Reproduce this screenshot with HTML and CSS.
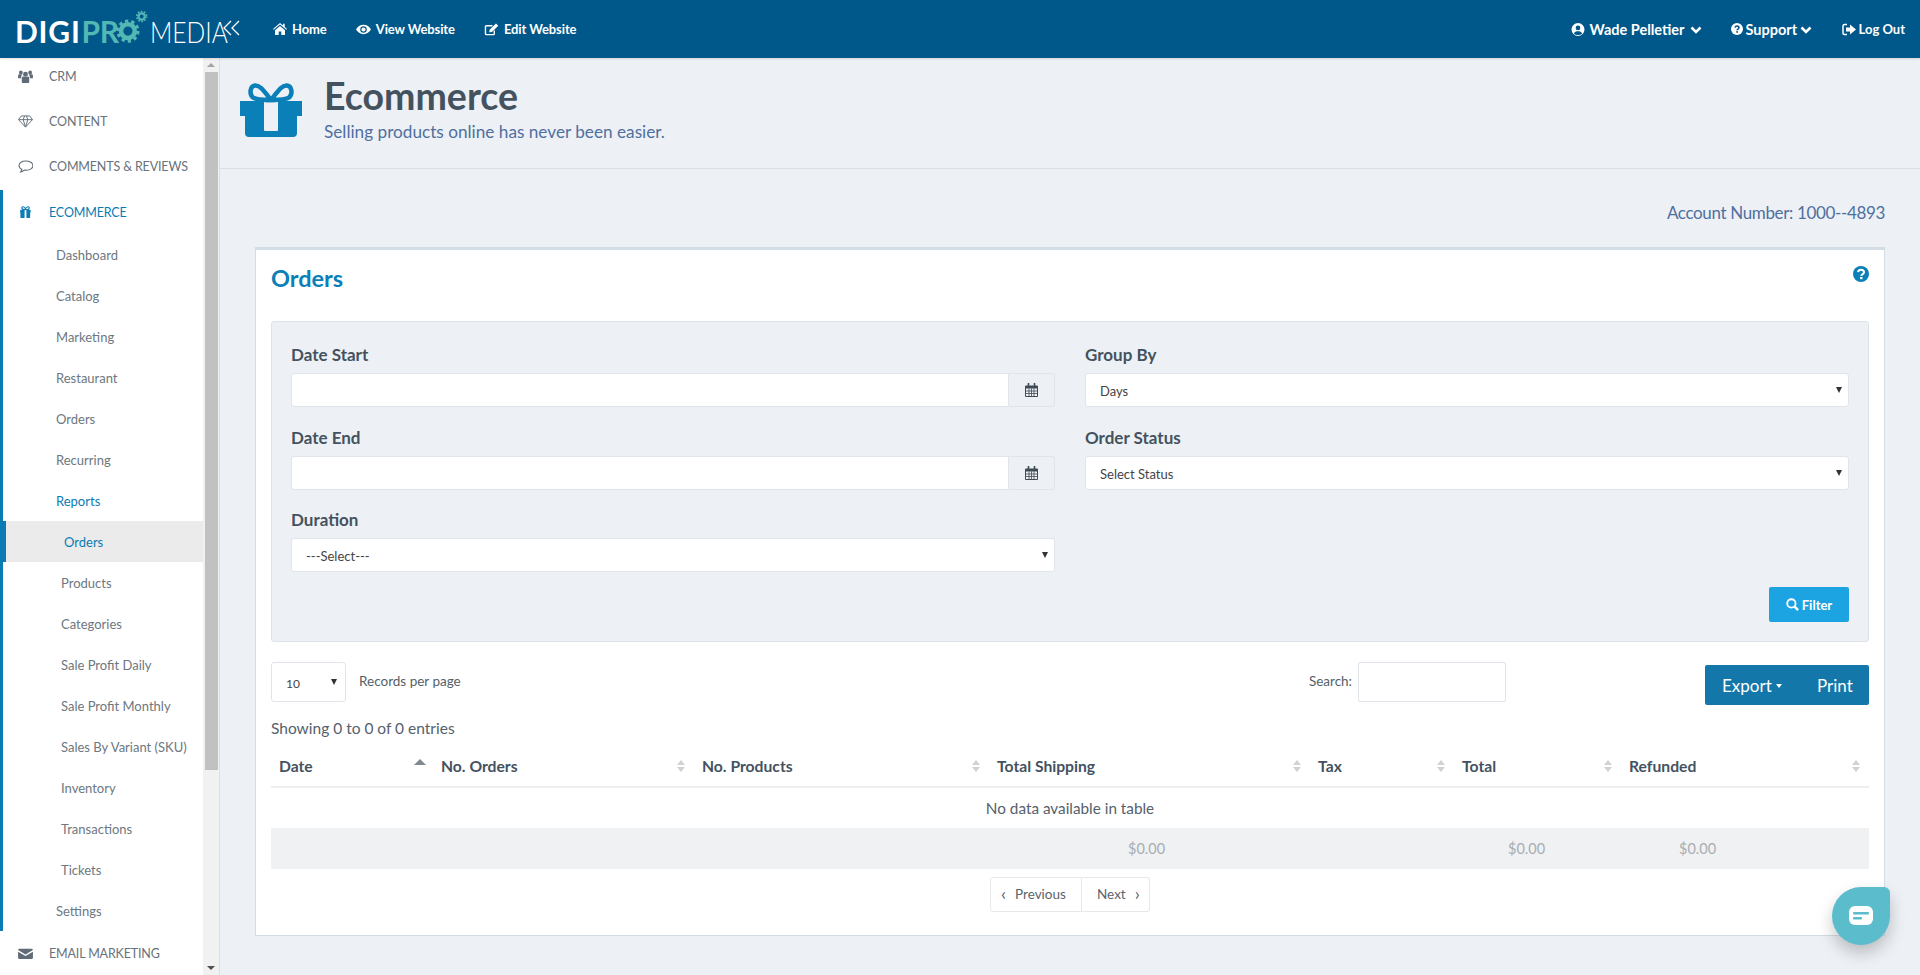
FILE: index.html
```html
<!DOCTYPE html>
<html lang="en">
<head>
<meta charset="utf-8">
<title>Ecommerce Orders</title>
<link rel="stylesheet" href="styles.css">
</head>
<body>
<header class="topbar">
  <div class="logo">
    <span class="lg-digi">DIGI</span><span class="lg-pro">PR</span>
    <svg class="lg-gear" viewBox="0 0 36 36"><g fill="none" stroke="#52b8b4"><circle cx="13" cy="23" r="7.5" stroke-width="5"/><circle cx="13" cy="23" r="11" stroke-width="3.4" stroke-dasharray="3.6 3.3"/><circle cx="28" cy="7" r="3.4" stroke-width="2.4"/><circle cx="28" cy="7" r="5.4" stroke-width="1.8" stroke-dasharray="1.9 1.5"/></g></svg>
    <span class="lg-media">MEDIA</span>
  </div>
  <svg class="collapse" viewBox="0 0 18 16"><path d="M8 1 1 8l7 7M16 1 9 8l7 7" fill="none" stroke="#fff" stroke-width="1.3"/></svg>
  <nav class="nav-left">
    <a class="nav-link"><svg class="ico13" viewBox="0 0 14 12"><path d="M7 0 0 6l.7.8L7 1.5l6.300 5.300L14 6l-2.300-2V.8H10v1.700zM2 7.300V12h3.700V8.500h2.600V12H12V7.300L7 3z" fill="#fff"/></svg>Home</a>
    <a class="nav-link"><svg class="ico15" viewBox="0 0 16 12"><path d="M8 1C4.500 1 1.700 3.200 0 6c1.700 2.800 4.500 5 8 5s6.300-2.200 8-5c-1.700-2.800-4.500-5-8-5zm0 8.500A3.500 3.500 0 1 1 8 2.500a3.500 3.500 0 0 1 0 7z" fill="#fff"/><circle cx="8" cy="6" r="2.200" fill="#fff"/></svg>View Website</a>
    <a class="nav-link"><svg class="ico15" viewBox="0 0 16 14"><path d="M11 8v3.500a1 1 0 0 1-1 1H2.500a1 1 0 0 1-1-1V4a1 1 0 0 1 1-1H9" fill="none" stroke="#fff" stroke-width="1.500"/><path d="M5.500 10 6 7.300 12.800.5 15.300 3 8.500 9.800z" fill="#fff"/></svg>Edit Website</a>
  </nav>
  <nav class="nav-right">
    <a class="nav-link user"><svg class="ico14" viewBox="0 0 14 14"><circle cx="7" cy="7" r="7" fill="#fff"/><circle cx="7" cy="5.300" r="2.500" fill="#00578a"/><path d="M2.500 11.300C3.300 9.300 5 8.800 7 8.800s3.700.5 4.500 2.500A6 6 0 0 1 7 13a6 6 0 0 1-4.500-1.700z" fill="#00578a"/></svg>Wade Pelletier<svg class="chev" viewBox="0 0 12 8"><path d="M1.500 1.500 6 6l4.500-4.500" fill="none" stroke="#fff" stroke-width="2.600"/></svg></a>
    <a class="nav-link support"><svg class="ico12" viewBox="0 0 14 14"><circle cx="7" cy="7" r="7" fill="#fff"/><path d="M4.800 5.300C5 4 6 3.500 7 3.500c1.300 0 2.300.8 2.300 2 0 1.600-2.200 1.600-2.200 3" fill="none" stroke="#00578a" stroke-width="1.700"/><rect x="6.100" y="9.500" width="2" height="1.800" fill="#00578a"/></svg>Support<svg class="chev" viewBox="0 0 12 8"><path d="M1.500 1.500 6 6l4.500-4.500" fill="none" stroke="#fff" stroke-width="2.600"/></svg></a>
    <a class="nav-link logout"><svg class="ico14" viewBox="0 0 14 12"><path d="M5 1H2.500A1.500 1.500 0 0 0 1 2.500v7A1.500 1.500 0 0 0 2.500 11H5" fill="none" stroke="#fff" stroke-width="1.500"/><path d="M8 1l6 5-6 5V8H4V4h4z" fill="#fff"/></svg>Log Out</a>
  </nav>
</header>
<div class="shell">
  <aside class="sidebar">
    <ul class="side-list">
      <li class="top-item lift"><svg class="side-ico" viewBox="0 0 16 14"><g fill="#5f6b76"><circle cx="8" cy="4.500" r="2.600"/><circle cx="3" cy="2.600" r="2"/><circle cx="13" cy="2.600" r="2"/><path d="M4 8.500C4 7.500 5 7 6 7h4c1 0 2 .5 2 1.500V13a1 1 0 0 1-1 1H5a1 1 0 0 1-1-1z"/><path d="M0 6c0-1 .8-1.500 1.500-1.500h3L3.300 7v2H.7A.7.700 0 0 1 0 8.300zM16 6c0-1-.8-1.500-1.500-1.500h-3L12.700 7v2h2.600a.7.700 0 0 0 .7-.7z"/></g></svg>CRM</li>
      <li class="top-item lift"><svg class="side-ico" viewBox="0 0 16 14"><path d="M3.500 1h9L15.500 5 8 13 .5 5zM.5 5h15M5.500 5 8 13l2.500-8M5.500 5 7 1M10.500 5 9 1" fill="none" stroke="#5f6b76" stroke-width="1"/></svg>CONTENT</li>
      <li class="top-item lift"><svg class="side-ico" viewBox="0 0 16 14"><path d="M8 1c-3.900 0-7 2.200-7 5 0 1.800 1.300 3.300 3.200 4.200-.2 1-.8 1.900-1.400 2.600 1.400-.2 2.900-.8 3.900-1.900.7.100 1.500.1 2.300.1 3.900 0 7-2.200 7-5s-3.100-5-8-5z" fill="none" stroke="#5f6b76" stroke-width="1.100"/></svg>COMMENTS &amp; REVIEWS</li>
      <li class="group">
        <div class="top-item active"><svg class="side-ico" viewBox="0 0 16 14"><path d="M4 1.800C4 .3 6.500.2 8 3c1.500-2.800 4-2.700 4-1.200S10 4 8 4 4 3.300 4 1.800z" fill="none" stroke="#0a7cb3" stroke-width="1.200"/><path d="M2.500 4h4.500v9H3.500a1 1 0 0 1-1-1V7h-.500zM9 4h4.500v3h-.5v5a1 1 0 0 1-1 1H9z" fill="#0a7cb3"/></svg>ECOMMERCE</div>
        <ul class="sub-list">
          <li class="sub">Dashboard</li>
          <li class="sub">Catalog</li>
          <li class="sub">Marketing</li>
          <li class="sub">Restaurant</li>
          <li class="sub">Orders</li>
          <li class="sub">Recurring</li>
          <li class="sub active">Reports</li>
          <li class="subsub current">Orders</li>
          <li class="subsub">Products</li>
          <li class="subsub">Categories</li>
          <li class="subsub">Sale Profit Daily</li>
          <li class="subsub">Sale Profit Monthly</li>
          <li class="subsub">Sales By Variant (SKU)</li>
          <li class="subsub">Inventory</li>
          <li class="subsub">Transactions</li>
          <li class="subsub">Tickets</li>
          <li class="sub">Settings</li>
        </ul>
      </li>
      <li class="top-item"><svg class="side-ico" viewBox="0 0 16 14"><path d="M1.500 2h13A1.500 1.500 0 0 1 16 3.300L8 8 0 3.300A1.500 1.500 0 0 1 1.500 2zM0 5l8 4.700L16 5v6.500a1.500 1.500 0 0 1-1.500 1.500h-13A1.500 1.500 0 0 1 0 11.500z" fill="#5f6b76"/></svg>EMAIL MARKETING</li>
    </ul>
  </aside>
  <div class="scroll">
    <div class="scroll-btn"><span class="tri-up"></span></div>
    <div class="scroll-thumb"></div>
    <div class="scroll-rest"></div>
    <div class="scroll-btn"><span class="tri-down"></span></div>
  </div>
  <main class="main">
    <section class="page-head">
      <svg class="gift" viewBox="0 0 62 54"><g fill="#0a7fb8"><rect x="0" y="18" width="62" height="15"/><path d="M5 33h52v17a4 4 0 0 1-4 4H9a4 4 0 0 1-4-4z"/></g><rect x="24" y="18" width="14" height="30" rx="1" fill="#edf1f5"/><g fill="none" stroke="#0a7fb8" stroke-width="4.500"><path d="M31 17C24 8 20 2 15 2.500 10 3 9 11 13 14.500c3 2.500 12 2.500 18 2.500z"/><path d="M31 17c7-9 11-15 16-14.500C52 3 53 11 49 14.500 46 17 37 17 31 17z"/></g></svg>
      <div class="head-text">
        <h1>Ecommerce</h1>
        <p>Selling products online has never been easier.</p>
      </div>
    </section>
    <div class="account">Account Number: 1000--4893</div>
    <section class="card">
      <div class="card-head">
        <h2>Orders</h2>
        <svg class="help" viewBox="0 0 16 16"><circle cx="8" cy="8" r="8" fill="#0a7fb8"/><path d="M5 6.200C5.200 4.500 6.500 3.700 8 3.700c1.700 0 3 1 3 2.500 0 2-2.700 2.100-2.700 3.800" fill="none" stroke="#fff" stroke-width="2"/><rect x="7.100" y="11" width="2.400" height="2.200" fill="#fff"/></svg>
      </div>
      <div class="filter">
        <div class="filter-grid">
          <div class="field"><label>Date Start</label><div class="input-group"><input class="ctrl grow" type="text"><span class="addon"><svg class="cal" viewBox="0 0 13 14"><path d="M1 2.500h11a1 1 0 0 1 1 1V13a1 1 0 0 1-1 1H1a1 1 0 0 1-1-1V3.500a1 1 0 0 1 1-1z" fill="#3f4a55"/><path d="M1 5.500h11v7.500H1z" fill="#edf1f5"/><path d="M4 5.500V13M6.500 5.500V13M9 5.500V13M1 8h11M1 10.500h11" stroke="#3f4a55" stroke-width=".8"/><path d="M3.500 0v3M9.500 0v3" stroke="#3f4a55" stroke-width="1.600"/></svg></span></div></div>
          <div class="field"><label>Group By</label><div class="sel"><select class="ctrl"><option>Days</option></select></div></div>
          <div class="field"><label>Date End</label><div class="input-group"><input class="ctrl grow" type="text"><span class="addon"><svg class="cal" viewBox="0 0 13 14"><path d="M1 2.500h11a1 1 0 0 1 1 1V13a1 1 0 0 1-1 1H1a1 1 0 0 1-1-1V3.500a1 1 0 0 1 1-1z" fill="#3f4a55"/><path d="M1 5.500h11v7.500H1z" fill="#edf1f5"/><path d="M4 5.500V13M6.500 5.500V13M9 5.500V13M1 8h11M1 10.500h11" stroke="#3f4a55" stroke-width=".8"/><path d="M3.500 0v3M9.500 0v3" stroke="#3f4a55" stroke-width="1.600"/></svg></span></div></div>
          <div class="field"><label>Order Status</label><div class="sel"><select class="ctrl"><option>Select Status</option></select></div></div>
          <div class="field"><label>Duration</label><div class="sel"><select class="ctrl"><option>---Select---</option></select></div></div>
        </div>
        <div class="filter-actions">
          <button class="btn-filter" type="button"><svg class="search-ico" viewBox="0 0 14 14"><circle cx="5.800" cy="5.800" r="4.500" fill="none" stroke="#fff" stroke-width="2"/><path d="m9 9 4 4" stroke="#fff" stroke-width="2.600"/></svg>Filter</button>
        </div>
      </div>
      <div class="tools">
        <div class="sel sel-len"><select class="ctrl"><option>10</option></select></div>
        <span class="rpp">Records per page</span>
        <span class="spacer"></span>
        <label class="search-lbl">Search:</label>
        <input class="search-input" type="text">
        <div class="exports"><span class="exp">Export<i class="caret"></i></span><span class="prt">Print</span></div>
      </div>
      <div class="showing">Showing 0 to 0 of 0 entries</div>
      <table class="grid">
        <colgroup><col class="c1"><col class="c2"><col class="c3"><col class="c4"><col class="c5"><col class="c6"><col class="c7"></colgroup>
        <thead>
          <tr>
            <th><div class="th"><span>Date</span><span class="sort asc"></span></div></th>
            <th><div class="th"><span>No. Orders</span><span class="sort"></span></div></th>
            <th><div class="th"><span>No. Products</span><span class="sort"></span></div></th>
            <th><div class="th"><span>Total Shipping</span><span class="sort"></span></div></th>
            <th><div class="th"><span>Tax</span><span class="sort"></span></div></th>
            <th><div class="th"><span>Total</span><span class="sort"></span></div></th>
            <th><div class="th"><span>Refunded</span><span class="sort"></span></div></th>
          </tr>
        </thead>
        <tbody><tr><td class="empty" colspan="7">No data available in table</td></tr></tbody>
        <tfoot>
          <tr><td></td><td></td><td></td><td class="v1">$0.00</td><td></td><td class="v2">$0.00</td><td class="v3">$0.00</td></tr>
        </tfoot>
      </table>
      <div class="pager">
        <a class="pg prev"><span class="ang">&#8249;</span>Previous</a><a class="pg next">Next<span class="ang">&#8250;</span></a>
      </div>
    </section>
  </main>
</div>
<div class="chat"><svg class="chat-ico" viewBox="0 0 24 20"><rect x="0" y="0" width="24" height="19" rx="6" fill="#fff"/><rect x="4" y="6" width="16" height="2.600" rx="1" fill="#5bbccb"/><rect x="4" y="11" width="9" height="2.600" rx="1" fill="#5bbccb"/></svg></div>
</body>
</html>
```

FILE: styles.css
```css
* { box-sizing: border-box; }
html, body { margin: 0; height: 100%; overflow: hidden; }
body { font-family: "Lato", "Noto Sans", sans-serif; font-size: 14px; color: #4a5561; background: #edf1f5; display: flex; flex-direction: column; }
ul { list-style: none; margin: 0; padding: 0; }

.topbar { height: 58px; flex: none; background: #00578a; color: #fff; display: flex; align-items: center; padding-left: 15px; padding-right: 15px; position: relative; z-index: 2; box-shadow: 0 1px 2px rgba(0,0,0,.12); }
.logo { width: 208px; flex: none; display: flex; align-items: center; height: 58px; padding-top: 3px; font-size: 30px; line-height: 1; white-space: nowrap; }
.lg-digi { font-weight: 700; letter-spacing: .8px; }
.lg-pro { font-weight: 700; color: #52b8b4; letter-spacing: -.5px; margin-left: 1px; }
.lg-gear { width: 33px; height: 33px; flex: none; margin: -9px -2px 0 -2px; }
.lg-media { font-weight: 300; font-size: 30px; display: inline-block; transform: scaleX(.82); transform-origin: left center; margin-left: 3px; }
.collapse { width: 18px; height: 16px; flex: none; margin-top: -2px; }
.nav-left { display: flex; margin-left: 32px; gap: 29px; }
.nav-right { display: flex; margin-left: auto; align-items: center; }
.nav-link { display: flex; align-items: center; gap: 5px; color: #fff; font-size: 13px; font-weight: 700; white-space: nowrap; letter-spacing: -.1px; }
.user { font-size: 14.500px; width: 160px; letter-spacing: 0; }
.support { font-size: 14.500px; gap: 3px; width: 111px; letter-spacing: 0; }
.logout { font-size: 13px; gap: 3px; letter-spacing: 0; }
.ico12 { width: 12px; height: 12px; }
.ico13 { width: 14px; height: 12px; }
.ico14 { width: 14px; height: 13px; }
.ico15 { width: 15px; height: 13px; }
.chev { width: 12px; height: 8px; margin-top: 2px; }

.shell { flex: 1; display: flex; min-height: 0; }
.sidebar { width: 203px; flex: none; background: #fff; overflow: hidden; }
.side-list { margin-top: -3px; }
.top-item { height: 45px; display: flex; align-items: center; padding-left: 18px; color: #68727c; font-size: 12.500px; white-space: nowrap; letter-spacing: -.15px; }
.top-item.lift { padding-bottom: 2px; }
.top-item.active { color: #0a7cb3; height: 44px; }
.side-ico { width: 15px; height: 13px; flex: none; margin-right: 16px; }
.group { border-left: 3px solid #0a7cb3; }
.group .top-item { padding-left: 15px; }
.sub, .subsub { height: 41px; display: flex; align-items: center; color: #6d7780; font-size: 13px; white-space: nowrap; }
.sub { padding-left: 53px; }
.sub.active { color: #0a7cb3; }
.subsub { padding-left: 58px; }
.current { background: #ebebeb; border-left: 3px solid #0a7cb3; color: #0a7cb3; padding-left: 58px; }

.scroll { width: 17px; flex: none; background: #f1f1f1; border-right: 1px solid #dbe0e5; display: flex; flex-direction: column; }
.scroll-btn { height: 14px; display: flex; align-items: center; justify-content: center; }
.scroll-thumb { height: 698px; background: #c1c1c1; margin: 0 1px 0 2px; }
.scroll-rest { flex: 1; }
.tri-up { border: 4px solid transparent; border-top: 0; border-bottom: 4px solid #a3a3a3; }
.tri-down { border: 4px solid transparent; border-bottom: 0; border-top: 4px solid #505050; }

.main { flex: 1; min-width: 0; background: #edf1f5; }
.page-head { height: 111px; border-bottom: 1px solid #d9dfe5; display: flex; padding: 25px 0 0 20px; }
.gift { width: 62px; height: 54px; flex: none; }
.head-text { margin-left: 22px; margin-top: -9px; }
.head-text h1 { margin: 0 0 2px; font-size: 37.500px; line-height: 44px; font-weight: 700; color: #44525f; }
.head-text p { margin: 0; font-size: 17.200px; line-height: 24px; color: #4f6fa0; }
.account { height: 78px; padding: 33px 35px 0 0; text-align: right; font-size: 17px; letter-spacing: -.35px; line-height: 22px; color: #4f6fa0; }
.card { margin: 0 35px; height: 689px; background: #fff; border: 1px solid #d3dde6; border-top-width: 3px; padding: 13px 15px 0; }
.card-head { display: flex; justify-content: space-between; height: 30px; margin-bottom: 28px; }
.card-head h2 { margin: 0; font-size: 23.500px; line-height: 30px; font-weight: 700; color: #0a7fb8; }
.help { width: 16px; height: 16px; margin: 3px 0 0 0; }

.filter { height: 321px; background: #edf1f5; border: 1px solid #dde3e8; border-radius: 3px; padding: 23px 19px 0; }
.filter-grid { display: grid; grid-template-columns: 764px 764px; column-gap: 30px; row-gap: 20.500px; }
.field label { display: block; font-size: 17px; font-weight: 700; line-height: 20px; color: #44525f; margin-bottom: 8px; }
.input-group { display: flex; }
.ctrl { height: 34px; width: 100%; border: 1px solid #dfe5ea; border-radius: 3px; background: #fff; font-family: inherit; font-size: 13px; color: #444; padding: 2px 14px 0; outline: 0; appearance: none; -webkit-appearance: none; }
.grow { flex: 1; border-radius: 3px 0 0 3px; }
.addon { width: 46px; height: 34px; flex: none; background: #edf1f5; border: 1px solid #dfe5ea; border-left: 0; border-radius: 0 3px 3px 0; display: flex; align-items: center; justify-content: center; }
.cal { width: 13px; height: 14px; }
.sel { position: relative; }
.sel::after { content: ""; position: absolute; right: 7px; top: 14px; border: 3px solid transparent; border-bottom: 0; border-top: 6px solid #333; }
.filter-actions { display: flex; justify-content: flex-end; margin-top: 15px; }
.btn-filter { width: 80px; height: 35px; background: #1ca4e2; color: #fff; border: 0; border-radius: 2px; font-family: inherit; font-size: 13px; font-weight: 700; display: flex; align-items: center; justify-content: center; gap: 3px; }
.search-ico { width: 13px; height: 13px; }

.tools { display: flex; align-items: flex-start; margin-top: 20px; height: 43px; }
.sel-len { width: 75px; }
.sel-len .ctrl { height: 40px; font-size: 12px; padding-left: 14px; }
.sel-len::after { right: 9px; top: 17px; border-width: 3.500px; border-top-width: 6px; border-bottom: 0; }
.rpp { margin-left: 13px; font-size: 13.500px; line-height: 38px; color: #555f68; }
.spacer { flex: 1; }
.search-lbl { font-size: 13.500px; line-height: 38px; color: #555f68; margin-right: 6px; }
.search-input { width: 148px; height: 40px; border: 1px solid #dfe5ea; border-radius: 2px; outline: 0; }
.exports { width: 164px; height: 40px; margin: 3px 0 0 199px; background: #1477a9; border-radius: 2px; color: #fff; font-size: 17px; display: flex; align-items: center; padding-left: 17px; }
.exp { width: 95px; display: flex; align-items: center; }
.caret { border: 3.500px solid transparent; border-top: 4px solid #fff; border-bottom: 0; margin-left: 4px; margin-top: 2px; }
.showing { margin-top: 13px; font-size: 15.500px; line-height: 20px; color: #55616c; }

.grid { width: 1598px; table-layout: fixed; border-collapse: collapse; margin-top: 8px; }
.c1 { width: 162px; } .c2 { width: 261px; } .c3 { width: 295px; } .c4 { width: 321px; } .c5 { width: 144px; } .c6 { width: 167px; } .c7 { width: 248px; }
.grid th { height: 41px; padding: 0 8px; border-bottom: 2px solid #eceef0; text-align: left; font-size: 15.700px; font-weight: 700; color: #44525f; }
.th { display: flex; justify-content: space-between; align-items: center; }
.sort { width: 10px; height: 14px; display: flex; flex-direction: column; align-items: center; justify-content: center; gap: 2px; }
.sort::before { content: ""; border: 4px solid transparent; border-top: 0; border-bottom: 5px solid #cfd2d5; }
.sort::after { content: ""; border: 4px solid transparent; border-bottom: 0; border-top: 5px solid #cfd2d5; }
.sort.asc { justify-content: flex-start; }
.sort.asc::before { border-width: 0 6px 6px; border-bottom-color: #808890; }
.sort.asc::after { display: none; }
.empty { height: 41px; padding-bottom: 2px; text-align: center; font-size: 15.300px; color: #55616c; }
.grid tfoot td { height: 41px; background: #f0f1f3; color: #a9adb2; font-size: 14.500px; padding: 0; }
.grid tfoot .v1 { padding-left: 139px; }
.grid tfoot .v2 { padding-left: 54px; }
.grid tfoot .v3 { padding-left: 58px; }

.pager { display: flex; justify-content: center; margin-top: 8px; }
.pg { height: 35px; display: flex; align-items: center; padding-bottom: 2px; border: 1px solid #e6e9ec; font-size: 13.500px; color: #5a646d; }
.prev { width: 92px; padding-left: 10px; gap: 9px; border-radius: 3px 0 0 3px; }
.next { width: 68px; padding-left: 15px; gap: 9px; border-left: 0; border-radius: 0 3px 3px 0; }
.ang { font-size: 18px; line-height: 1; margin-top: -2px; }

.chat { position: fixed; left: 1832px; top: 887px; width: 58px; height: 58px; background: #5bbccb; border-radius: 50% 6px 50% 50%; box-shadow: 0 8px 16px rgba(0,0,0,.22); display: flex; align-items: center; justify-content: center; }
.chat-ico { width: 24px; height: 20px; }
```
